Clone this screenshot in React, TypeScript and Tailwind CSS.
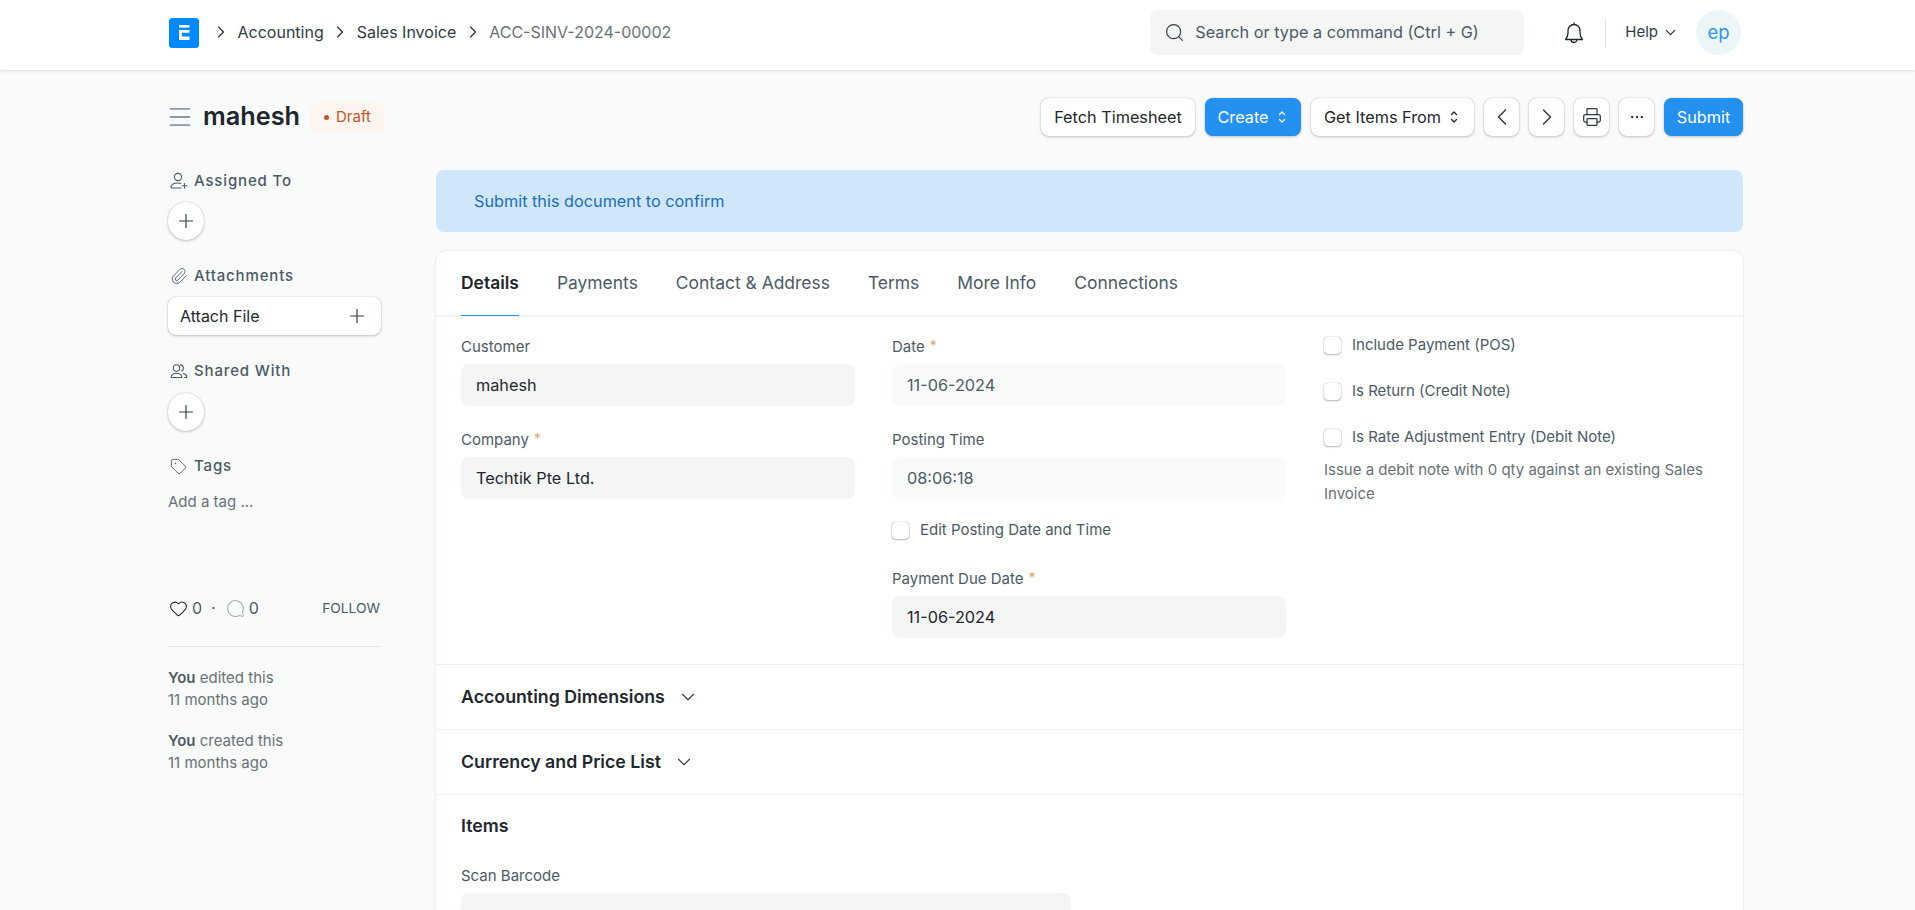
import { ChevronDown, ChevronLeft, ChevronRight, Heart, Menu, MessageCircle, Paperclip, Plus, Printer, Search, Tag } from "lucide-react"
import type { ReactNode } from "react"

const btnShadow = "shadow-[0_0_1px_rgba(0,0,0,0.3),0_1px_3px_rgba(0,0,0,0.2)]"

function Crumb({ children, muted }: { children: ReactNode; muted?: boolean }) {
  return (
    <>
      <ChevronRight className="w-[20px] h-[20px] mx-[6.5px] text-[#1f272e]" strokeWidth={1.3} />
      <span className={muted ? "text-[#687178]" : "text-[#313b44]"}>{children}</span>
    </>
  )
}

function Carets() {
  return (
    <svg width="8" height="14" viewBox="0 0 8 14" fill="none" stroke="currentColor" strokeWidth="1.3" strokeLinecap="round" strokeLinejoin="round" className="ml-[9px]">
      <path d="M1.5 4.5 4 2l2.5 2.5" />
      <path d="M1.5 9.5 4 12l2.5-2.5" />
    </svg>
  )
}

function Button({ children, className = "" }: { children: ReactNode; className?: string }) {
  return (
    <button className={`h-[38px] rounded-[8px] bg-white text-[#1f272e] flex items-center justify-center ${btnShadow} ${className}`}>
      {children}
    </button>
  )
}

function SideHead({ icon, children }: { icon: ReactNode; children: ReactNode }) {
  return (
    <div className="h-[20px] flex items-center text-[15px] font-medium tracking-[0.85px] text-[#4c5a67]">
      <span className="w-[26px] pl-[2px] flex items-center">{icon}</span>
      {children}
    </div>
  )
}

function RoundPlus() {
  return (
    <button className={`w-[36px] h-[38px] rounded-full bg-white flex items-center justify-center ${btnShadow}`}>
      <Plus className="w-[22px] h-[22px] text-[#313b44]" strokeWidth={1.3} />
    </button>
  )
}

function Field({ label, req, value, disabled, className = "" }: { label: string; req?: boolean; value?: string; disabled?: boolean; className?: string }) {
  return (
    <div className={className}>
      <div className="h-[20px] flex items-center text-[15px] text-[#4c5a67] mb-[7px]">
        {label}
        {req && <span className="ml-[5px] text-[14px] text-[#e2a36b] -mt-[3px]">*</span>}
      </div>
      <div className={`h-[42px] rounded-[8px] pl-[15px] flex items-center text-[16.25px] ${disabled ? "bg-[#f9fafa] text-[#4c5a67]" : "bg-[#f4f5f5] text-[#1f272e]"}`}>
        {value}
      </div>
    </div>
  )
}

function Check({ label, className = "" }: { label: string; className?: string }) {
  return (
    <div className={`flex items-center h-[20px] text-[15px] text-[#4c5a67] ${className}`}>
      <span className="w-[17px] h-[17px] rounded-[4px] bg-white mr-[11px] shadow-[0_0_1px_rgba(0,0,0,0.5),0_1px_2px_rgba(0,0,0,0.25)]" />
      {label}
    </div>
  )
}

function Section({ title }: { title: string }) {
  return (
    <div className="h-[65px] border-b border-[#eef0f2] flex items-center pl-[25px] text-[17.75px] font-semibold text-[#1f272e]">
      {title}
      <ChevronDown className="w-[22px] h-[22px] ml-[12px] text-[#313b44]" strokeWidth={1.2} />
    </div>
  )
}

export default function App() {
  return (
    <div className="h-[910px] w-full overflow-hidden bg-[#f9fafa] font-['Inter',sans-serif]">
      {/* Navbar */}
      <div className="h-[70px] pb-[5px] bg-white shadow-[0_1px_3px_rgba(0,0,0,0.12)] relative flex items-center pl-[169px] pr-[174px] text-[16.25px]">
        <svg width="30" height="30" viewBox="0 0 30 30">
          <rect width="30" height="30" rx="3.5" fill="#0089ff" />
          <rect x="10" y="7" width="10.5" height="2.6" fill="#fff" />
          <path d="M10 12h10.5v2.8h-7.5v3.6h7.5V22H10z" fill="#fff" />
        </svg>
        <div className="flex items-center ml-[5.5px] -mt-[1px] text-[16px]">
          <Crumb>Accounting</Crumb>
          <Crumb>Sales Invoice</Crumb>
          <Crumb muted>ACC-SINV-2024-00002</Crumb>
        </div>
        <div className="ml-auto w-[374px] h-[45px] rounded-[8px] bg-[#f4f5f5] flex items-center pl-[14px] text-[#4c5a67]">
          <Search className="w-[21px] h-[21px] mr-[10px] text-[#313b44]" strokeWidth={1.3} />
          Search or type a command (Ctrl + G)
        </div>
        <svg width="22" height="24" viewBox="0 0 22 24" fill="none" stroke="#1f272e" strokeWidth="1.3" strokeLinejoin="round" className="ml-[39px]">
          <path d="M11 1.5v1.8" />
          <path d="M2.5 18.5c1.5-1.5 2.5-3 2.5-6.5V9.5a6 6 0 0 1 12 0V12c0 3.5 1 5 2.5 6.5z" />
          <path d="M8 18.5a3 3 0 0 0 6 0" />
        </svg>
        <div className="w-px h-[30px] bg-[#e2e6e9] ml-[20px]" />
        <span className="ml-[19px] text-[15px] text-[#313b44]">Help</span>
        <ChevronDown className="w-[17px] h-[17px] ml-[4px] text-[#1f272e]" strokeWidth={1.6} />
        <div className="w-[45px] h-[45px] rounded-full bg-[#ecf5f8] text-[#2f95ee] flex items-center justify-center text-[18.5px] ml-[17px]">ep</div>
      </div>

      {/* Page head */}
      <div className="h-[66px] mt-[14px] pl-[166px] pr-[172px] flex items-center">
        <Menu className="w-[28px] h-[28px] text-[#8d99a6]" strokeWidth={1.6} />
        <span className="ml-[9px] text-[25.25px] font-semibold text-[#1f272e]">mahesh</span>
        <div className="ml-[10px] h-[30px] w-[75px] rounded-[8px] bg-[#fff5f0] text-[#c0582b] text-[15px] flex items-center justify-center">
          <span className="w-[5px] h-[5px] rounded-full bg-[#c0582b] mr-[7px]" />
          Draft
        </div>
        <div className="ml-auto flex items-center gap-[10px] text-[16.25px]">
          <Button className="w-[154px]">Fetch Timesheet</Button>
          <button className={`h-[38px] w-[96px] pr-[3px] rounded-[8px] bg-[#2490ef] text-white flex items-center justify-center ${btnShadow}`}>
            Create
            <Carets />
          </button>
          <Button className="w-[163px] pr-[3px]">
            Get Items From
            <Carets />
          </Button>
          <Button className="w-[35px]"><ChevronLeft className="w-[28px] h-[28px] text-[#313b44]" strokeWidth={1.3} /></Button>
          <Button className="w-[35px]"><ChevronRight className="w-[28px] h-[28px] text-[#313b44]" strokeWidth={1.3} /></Button>
          <Button className="w-[35px]"><Printer className="w-[20px] h-[20px] text-[#313b44]" strokeWidth={1.5} /></Button>
          <Button className="w-[35px]">
            <svg width="14" height="4" viewBox="0 0 14 4" fill="#313b44">
              <circle cx="2.2" cy="2" r="1.2" />
              <circle cx="7" cy="2" r="1.2" />
              <circle cx="11.8" cy="2" r="1.2" />
            </svg>
          </Button>
          <button className={`h-[38px] w-[79px] rounded-[8px] bg-[#2490ef] text-white ${btnShadow}`}>Submit</button>
        </div>
      </div>

      <div className="flex pl-[168px] pr-[172px]">
        {/* Sidebar */}
        <div className="w-[213px] mr-[55px] shrink-0 mt-[21px]">
          <SideHead
            icon={
              <svg width="18" height="18" viewBox="0 0 18 18" fill="none" stroke="#4c5a67" strokeWidth="1.1" strokeLinecap="round" strokeLinejoin="round">
                <circle cx="8" cy="5" r="3.6" />
                <path d="M11 16H2c-.8 0-1.2-.6-1-1.3.6-2.2 3-3.7 6.5-3.7 1.2 0 2.3.2 3.2.5" />
                <path d="M14.5 11.5v4.5M12.2 13.8h4.6" />
              </svg>
            }
          >
            Assigned To
          </SideHead>
          <div className="mt-[11px]"><RoundPlus /></div>
          <div className="mt-[26px]"><SideHead icon={<Paperclip className="w-[18px] h-[18px] text-[#4c5a67]" strokeWidth={1.2} />}>Attachments</SideHead></div>
          <Button className="w-[213px] !justify-between pl-[12px] pr-[13px] mt-[11px]">
            Attach File
            <Plus className="w-[22px] h-[22px] text-[#313b44]" strokeWidth={1.3} />
          </Button>
          <div className="mt-[26px]">
            <SideHead
              icon={
                <svg width="18" height="18" viewBox="0 0 18 18" fill="none" stroke="#4c5a67" strokeWidth="1.1" strokeLinecap="round" strokeLinejoin="round">
                  <circle cx="6.5" cy="6" r="3.2" />
                  <path d="M1.2 15.5c-.2-2.6 2-4.3 5.3-4.3s5.5 1.7 5.3 4.3z" />
                  <path d="M10.5 2.9a3.2 3.2 0 0 1 1 6.1M13.5 11.6c2 .5 3.4 1.9 3.3 3.9h-2.5" />
                </svg>
              }
            >
              Shared With
            </SideHead>
          </div>
          <div className="mt-[12px]"><RoundPlus /></div>
          <div className="mt-[25px]"><SideHead icon={<Tag className="w-[17px] h-[17px] text-[#4c5a67]" strokeWidth={1.2} />}>Tags</SideHead></div>
          <div className="mt-[16px] text-[15px] text-[#687178] leading-[20px]">Add a tag ...</div>

          <div className="mt-[86px] h-[20px] flex items-center text-[16px] text-[#4c5a67]">
            <Heart className="w-[19px] h-[19px] ml-[1px] text-[#1f272e]" strokeWidth={1.3} />
            <span className="ml-[4px]">0</span>
            <span className="ml-[9px]">·</span>
            <MessageCircle className="w-[19px] h-[19px] ml-[10px] text-[#a6b1b9] -scale-x-100" strokeWidth={1.3} />
            <span className="ml-[4px]">0</span>
            <span className="ml-auto pr-[1px] text-[13.75px] text-[#4c5a67]">FOLLOW</span>
          </div>
          <div className="h-px bg-[#e2e6e9] mt-[28px]" />
          <div className="mt-[20px] text-[15px] leading-[22px] text-[#687178]">
            <div><b className="font-semibold text-[#4c5a67]">You</b> edited this</div>
            <div>11 months ago</div>
            <div className="mt-[19px]"><b className="font-semibold text-[#4c5a67]">You</b> created this</div>
            <div>11 months ago</div>
          </div>
        </div>

        {/* Main */}
        <div className="flex-1 min-w-0 mt-[20px]">
          <div className="h-[62px] rounded-[8px] bg-[#d0e6fb] text-[#1c6fb5] text-[16.25px] flex items-center pl-[38px]">
            Submit this document to confirm
          </div>
          <div className="mt-[19px] bg-white rounded-t-[10px] shadow-[0_0_2px_rgba(0,0,0,0.15)] h-[700px]">
            <div className="h-[66px] border-b-2 border-[#f4f5f6] flex pl-[25px] gap-[38px] text-[17.45px] text-[#4c5a67]">
              <div className="h-[65px] flex items-center border-b border-[#2490ef] font-semibold text-[#1f272e]">Details</div>
              <div className="h-[65px] flex items-center">Payments</div>
              <div className="h-[65px] flex items-center">Contact &amp; Address</div>
              <div className="h-[65px] flex items-center">Terms</div>
              <div className="h-[65px] flex items-center">More Info</div>
              <div className="h-[65px] flex items-center">Connections</div>
            </div>

            <div className="h-[348px] border-b border-[#eef0f2] flex pl-[25px] gap-[37px] pt-[20px]">
              <div className="w-[394px]">
                <Field label="Customer" value="mahesh" />
                <Field label="Company" req value="Techtik Pte Ltd." className="mt-[24px]" />
              </div>
              <div className="w-[394px]">
                <Field label="Date" req value="11-06-2024" disabled />
                <Field label="Posting Time" value="08:06:18" disabled className="mt-[24px]" />
                <Check label="Edit Posting Date and Time" className="mt-[21px]" />
                <Field label="Payment Due Date" req value="11-06-2024" className="mt-[29px]" />
              </div>
              <div className="w-[394px] ml-[1px] -mt-[2px]">
                <Check label="Include Payment (POS)" />
                <Check label="Is Return (Credit Note)" className="mt-[26px]" />
                <Check label="Is Rate Adjustment Entry (Debit Note)" className="mt-[26px]" />
                <div className="mt-[11px] text-[15px] leading-[24px] text-[#687178]">
                  Issue a debit note with 0 qty against an existing Sales Invoice
                </div>
              </div>
            </div>

            <Section title="Accounting Dimensions" />
            <Section title="Currency and Price List" />
            <div className="pl-[25px] pt-[21px]">
              <div className="text-[17.75px] font-semibold text-[#1f272e] leading-[20px]">Items</div>
              <div className="mt-[30px]"><Field label="Scan Barcode" className="w-[610px]" /></div>
            </div>
          </div>
        </div>
      </div>
    </div>
  )
}
